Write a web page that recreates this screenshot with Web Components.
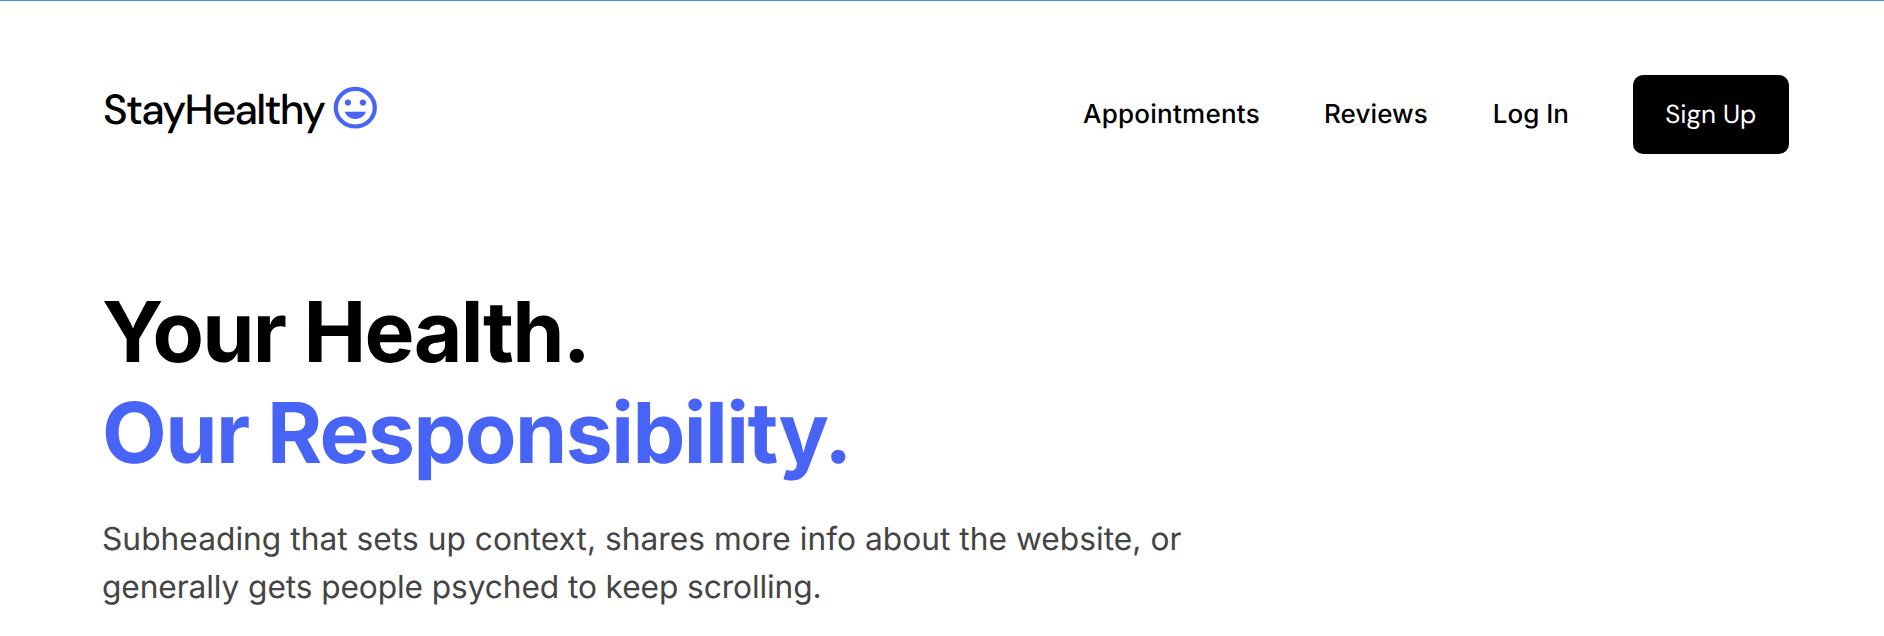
<!DOCTYPE html>
<html lang="en"><head><meta charset="utf-8"><title>StayHealthy</title>
<style>html,body{margin:0;background:#fff;overflow:hidden}body{height:636px;text-rendering:geometricPrecision}</style></head><body><health-page></health-page>
<script>
const define=(name,html)=>customElements.define(name,class extends HTMLElement{constructor(){super();this.attachShadow({mode:'open'}).innerHTML=html}});
define('smile-icon',`<style>:host{display:block;width:44px;height:44px}svg{display:block}</style><svg width="44" height="44" viewBox="0 0 44 44"><ellipse cx="22.3" cy="21.7" rx="19.5" ry="18.8" fill="none" stroke="#4864f7" stroke-width="4.2"/><circle cx="14.9" cy="16.500" r="3.1" fill="#4864f7"/><circle cx="29.9" cy="16.500" r="3.1" fill="#4864f7"/><path d="M11.600 25.800H33C31.300 30.300 27.300 33 22.300 33S13.300 30.300 11.600 25.800Z" fill="#4864f7"/></svg>`);
define('brand-logo',`<style>:host{display:flex;align-items:flex-start;font:500 42px/52px "DM Sans","Open Sans",sans-serif;color:#000}span{letter-spacing:-1.7px;width:230px;white-space:nowrap;padding-top:3px}smile-icon{margin-top:4px}</style><span>StayHealthy</span><smile-icon></smile-icon>`);
define('nav-link',`<style>:host{display:block;font:500 26px/32px Inter,sans-serif;white-space:nowrap}</style><slot></slot>`);
define('sign-button',`<style>:host{display:flex;box-sizing:border-box;width:155.500px;height:79px;align-items:center;justify-content:center;background:#000;border-radius:10px;color:#fff;font:400 26px/32px "DM Sans",Lato,sans-serif}</style><slot></slot>`);
define('site-header',`<style>:host{display:flex;justify-content:space-between;align-items:flex-start;height:79px}nav{display:flex;align-items:center;gap:64px}nav-link:first-child{letter-spacing:.25px}nav-link:nth-child(2){letter-spacing:.12px;margin-right:.9px}brand-logo{margin:7px 0 0 1px}</style><brand-logo></brand-logo><nav><nav-link>Appointments</nav-link><nav-link>Reviews</nav-link><nav-link>Log In</nav-link><sign-button>Sign Up</sign-button></nav>`);
define('hero-copy',`<style>:host{display:block;margin-top:128px;font-family:Inter,sans-serif}h1{margin:0;font-size:84px;line-height:101px;font-weight:700;letter-spacing:-1.72px}h1 span{display:block}.blue{color:#4864f7;letter-spacing:-1.54px}p{margin:31px 0 0;font-size:31.700px;line-height:47.700px;color:#444;letter-spacing:.03px}p span{display:block}p span:last-child{letter-spacing:-.1px}</style><h1><span>Your Health.</span><span class="blue">Our Responsibility.</span></h1><p><span>Subheading that sets up context, shares more info about the website, or</span><span>generally gets people psyched to keep scrolling.</span></p>`);
define('health-page',`<style>:host{display:block;box-sizing:border-box;height:636px;padding:74px 95.500px 0 102px;border-top:1px solid #438ade}</style><site-header></site-header><hero-copy></hero-copy>`);
</script></body></html>
